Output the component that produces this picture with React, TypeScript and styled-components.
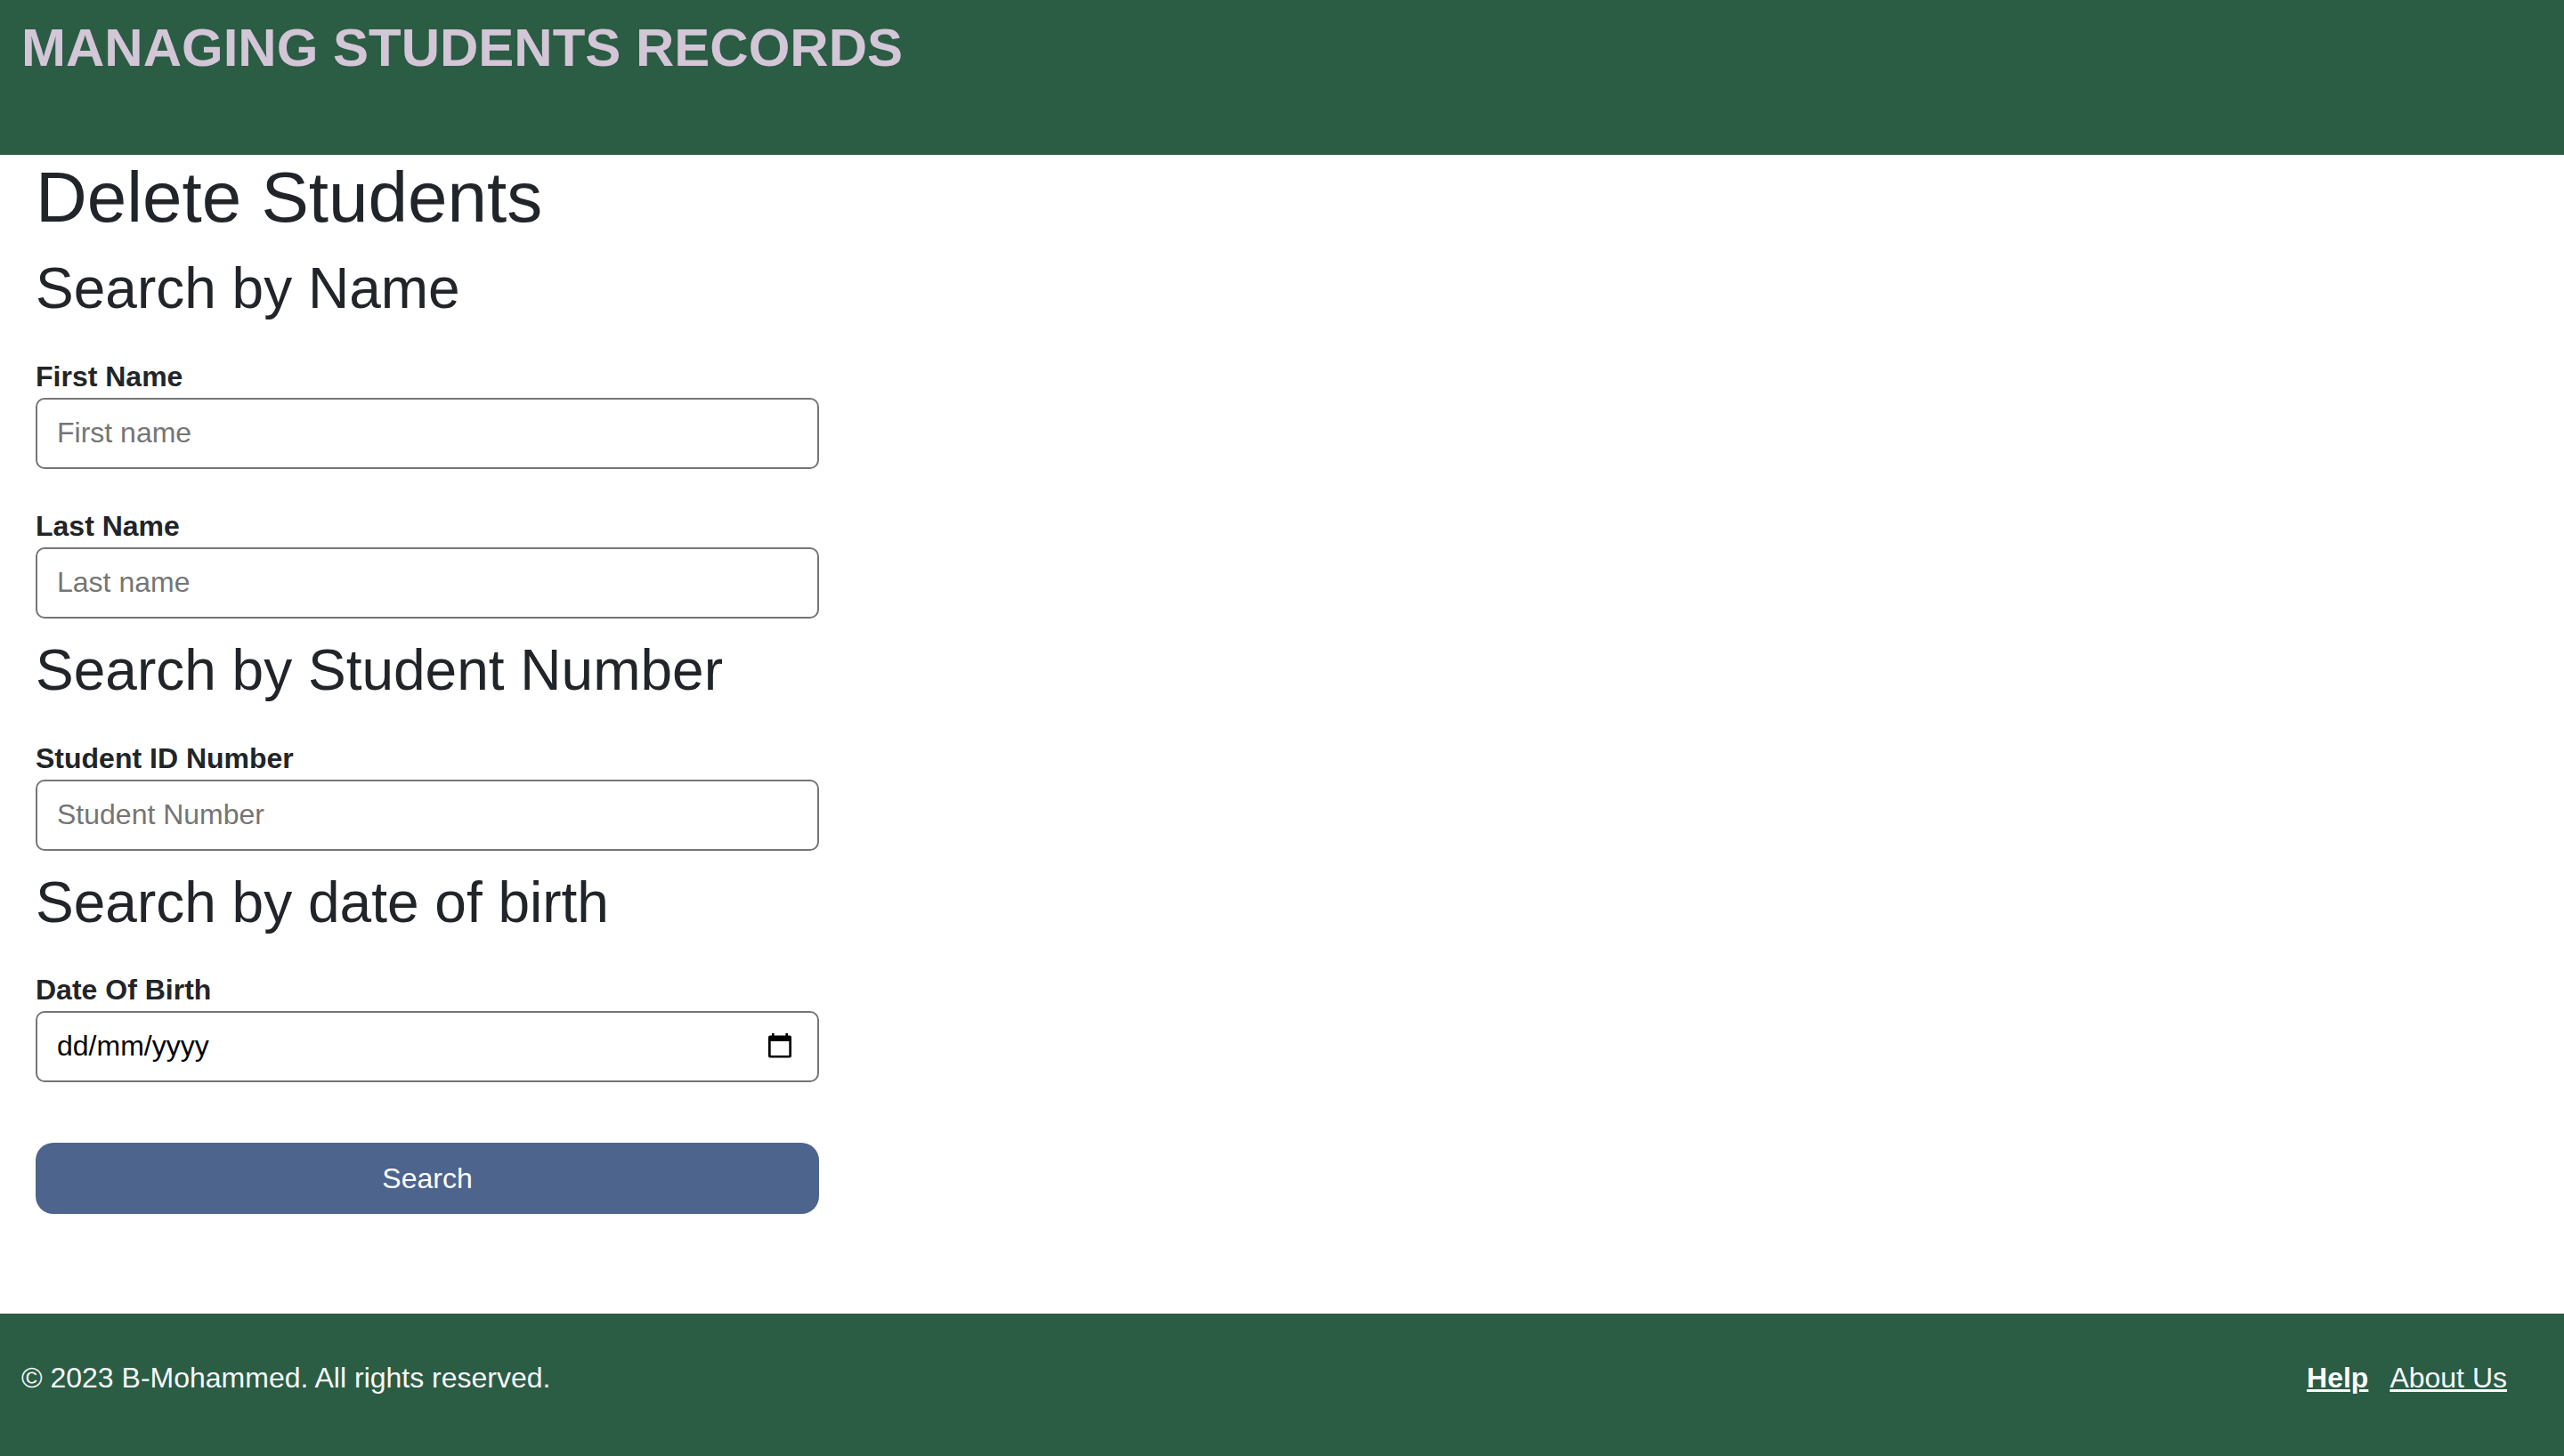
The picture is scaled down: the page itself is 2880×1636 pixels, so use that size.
import React from "react";
import styled, { createGlobalStyle } from "styled-components";

const GlobalStyle = createGlobalStyle`
  *, *::before, *::after { box-sizing: border-box; }
  body {
    margin: 0;
    background: #ffffff;
    color: #212529;
    font-family: "Liberation Sans", Helvetica, Arial, sans-serif;
    font-size: 32px;
    line-height: 1.5;
  }
`;

const Page = styled.div`
  display: flex;
  flex-direction: column;
  min-height: 100vh;
`;

const Header = styled.header`
  padding: 18px 24px 84px;
  background: #2b5c44;
`;

const SiteTitle = styled.p`
  margin: 0;
  color: #d3c6d7;
  font-size: 60px;
  line-height: 72px;
  font-weight: 700;
`;

const Main = styled.main`
  flex: 1;
  padding: 0 40px 112px;
`;

const PageTitle = styled.h1`
  margin: 0 0 16px;
  font-size: 80px;
  line-height: 1.2;
  font-weight: 400;
`;

const SearchForm = styled.form`
  max-width: 880px;
`;

const Section = styled.section`
  margin-bottom: 20px;
`;

const SectionTitle = styled.h2`
  margin: 0 0 36px;
  font-size: 64px;
  line-height: 1.2;
  font-weight: 400;
`;

const Fields = styled.div`
  display: flex;
  flex-direction: column;
  gap: 40px;
`;

const Field = styled.div`
  display: flex;
  flex-direction: column;
`;

const Label = styled.label`
  font-weight: 700;
`;

const InputFrame = styled.div`
  display: flex;
  align-items: center;
  height: 80px;
  padding: 0 22px 2px;
  border: 2px solid #767676;
  border-radius: 10px;
  background: #ffffff;
`;

const Input = styled.input<{ $dark?: boolean }>`
  flex: 1;
  min-width: 0;
  padding: 0;
  border: 0;
  outline: 0;
  background: transparent;
  color: #000000;
  font: inherit;

  &::placeholder {
    color: ${(p) => (p.$dark ? "#000000" : "#757575")};
    opacity: 1;
  }
`;

const PickerButton = styled.button`
  display: flex;
  padding: 4px;
  border: 0;
  background: transparent;
  color: #000000;
  cursor: pointer;
`;

const SubmitButton = styled.button`
  width: 100%;
  height: 80px;
  margin-top: 48px;
  border: 0;
  border-radius: 20px;
  background: #4d648d;
  color: #ffffff;
  font: inherit;
  cursor: pointer;
`;

const Footer = styled.footer`
  display: flex;
  justify-content: space-between;
  padding: 48px 64px 64px 24px;
  background: #2b5c44;
  color: #f8f9fa;
`;

const Copyright = styled.p`
  margin: 0;
`;

const FooterNav = styled.nav`
  display: flex;
  gap: 24px;
`;

const FooterLink = styled.a<{ $bold?: boolean }>`
  color: inherit;
  font-weight: ${(p) => (p.$bold ? 700 : 400)};
  text-decoration: underline;
  text-decoration-thickness: 3px;
`;

function CalendarIcon() {
  return (
    <svg width="32" height="32" viewBox="0 0 32 32" aria-hidden="true">
      <path
        fill="currentColor"
        fillRule="evenodd"
        d="M7 2h2.6v2.6h12.8V2H25v2.6h2a2 2 0 0 1 2 2V27.600a2 2 0 0 1-2 2H5a2 2 0 0 1-2-2V6.600a2 2 0 0 1 2-2h2zM5.700 11v16h20.600V11z"
      />
    </svg>
  );
}

interface TextFieldProps {
  id: string;
  label: string;
  placeholder: string;
}

function TextField({ id, label, placeholder }: TextFieldProps) {
  return (
    <Field>
      <Label htmlFor={id}>{label}</Label>
      <InputFrame>
        <Input id={id} name={id} type="text" placeholder={placeholder} />
      </InputFrame>
    </Field>
  );
}

function DateField({ id, label, placeholder }: TextFieldProps) {
  return (
    <Field>
      <Label htmlFor={id}>{label}</Label>
      <InputFrame>
        <Input
          id={id}
          name={id}
          type="text"
          inputMode="numeric"
          placeholder={placeholder}
          $dark
        />
        <PickerButton type="button" aria-label="Show date picker">
          <CalendarIcon />
        </PickerButton>
      </InputFrame>
    </Field>
  );
}

export default function App() {
  return (
    <>
      <GlobalStyle />
      <Page>
        <Header>
          <SiteTitle>MANAGING STUDENTS RECORDS</SiteTitle>
        </Header>
        <Main>
          <PageTitle>Delete Students</PageTitle>
          <SearchForm onSubmit={(e) => e.preventDefault()}>
            <Section>
              <SectionTitle>Search by Name</SectionTitle>
              <Fields>
                <TextField id="firstName" label="First Name" placeholder="First name" />
                <TextField id="lastName" label="Last Name" placeholder="Last name" />
              </Fields>
            </Section>
            <Section>
              <SectionTitle>Search by Student Number</SectionTitle>
              <TextField
                id="studentNumber"
                label="Student ID Number"
                placeholder="Student Number"
              />
            </Section>
            <Section>
              <SectionTitle>Search by date of birth</SectionTitle>
              <DateField id="dateOfBirth" label="Date Of Birth" placeholder="dd/mm/yyyy" />
            </Section>
            <SubmitButton type="submit">Search</SubmitButton>
          </SearchForm>
        </Main>
        <Footer>
          <Copyright>© 2023 B-Mohammed. All rights reserved.</Copyright>
          <FooterNav aria-label="Footer">
            <FooterLink href="#help" $bold>
              Help
            </FooterLink>
            <FooterLink href="#about">About Us</FooterLink>
          </FooterNav>
        </Footer>
      </Page>
    </>
  );
}
